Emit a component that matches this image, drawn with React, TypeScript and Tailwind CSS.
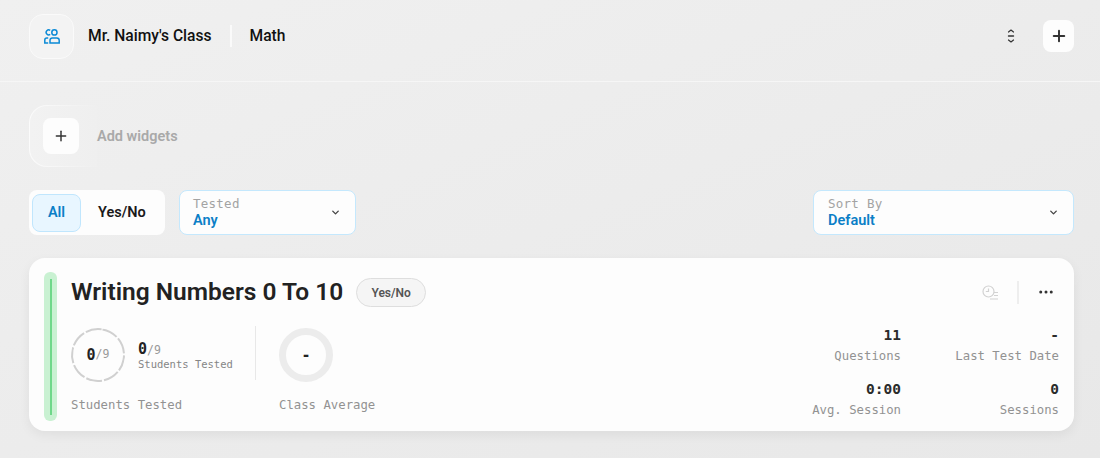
import React from "react";
import { ChevronDown, Plus, Ellipsis } from "lucide-react";

const mono = "font-['DejaVu_Sans_Mono',monospace]";

function ClassIcon() {
  return (
    <svg width="16" height="15" viewBox="0 0 16 15" fill="none" stroke="#0b8ad6" strokeWidth="1.5">
      <path d="M6.2 1.4a2.5 2.5 0 1 0 0 4" />
      <circle cx="10.4" cy="3.4" r="2.6" />
      <path d="M4.2 9H2.8a2 2 0 0 0-2 2v3h3.4" />
      <path d="M8.2 9h4.6a2.4 2.4 0 0 1 2.4 2.4V14H6v-2.8A2.2 2.2 0 0 1 8.2 9z" />
    </svg>
  );
}

function SortToggleIcon() {
  return (
    <svg width="8" height="14" viewBox="0 0 8 14" fill="none" stroke="#333" strokeWidth="1.2" strokeLinecap="round" strokeLinejoin="round">
      <path d="M1.5 3 4 1l2.5 2" />
      <path d="M1.5 7h5" strokeWidth="1.4" />
      <path d="M1.5 11 4 13l2.5-2" />
    </svg>
  );
}

function ClockListIcon() {
  return (
    <svg width="17" height="16" viewBox="0 0 17 16" fill="none" stroke="#d2d2d2" strokeWidth="1.2">
      <circle cx="6.5" cy="6.5" r="5.5" />
      <path d="M6.5 3.5v3H3.8" />
      <path d="M12 7.5h4M12 10.5h4M8 14h8" />
    </svg>
  );
}

function DashedRing() {
  return (
    <svg width="54" height="54" viewBox="0 0 54 54" fill="none" className="-rotate-[80deg]">
      <circle cx="27" cy="27" r="26" stroke="#d0d0d0" strokeWidth="2" strokeDasharray="16.15 2" />
    </svg>
  );
}

function SelectBox({ label, value, className }: { label: string; value: string; className: string }) {
  return (
    <div className={`${className} h-[45px] bg-[#fdfdfd] border border-[#c4e8fd] rounded-lg pr-[14px] flex items-center justify-between`}>
      <div className="flex flex-col">
        <span className={`${mono} text-[12.5px] leading-[15px] text-[#a3a3a3] tracking-[0.02em]`}>{label}</span>
        <span className="font-['Roboto',sans-serif] font-semibold text-[14.5px] leading-[19px] text-[#0b7fc7]">{value}</span>
      </div>
      <ChevronDown size={11} strokeWidth={3} className="text-[#444]" />
    </div>
  );
}

function Stat({ value, label }: { value: string; label: string }) {
  return (
    <div className="flex flex-col items-end">
      <span className={`${mono} font-semibold text-[14.5px] leading-[20px] text-[#2b2b2b]`}>{value}</span>
      <span className={`${mono} text-[12.3px] leading-[16px] mt-[3px] text-[#929292]`}>{label}</span>
    </div>
  );
}

export default function App() {
  return (
    <div className="w-[1100px] h-[458px] overflow-hidden bg-gradient-to-br from-[#f0f0f0] to-[#e8e8e8] font-['Roboto',sans-serif]">
      {/* header */}
      <header className="h-[82px] border-b border-[#f6f6f6] pl-[29px] pr-[26px] pb-[9px] flex items-center">
        <div className="w-[45px] h-[45px] mt-px rounded-[14px] border border-[#fafafa] bg-[#f3f3f3] flex items-center justify-center">
          <ClassIcon />
        </div>
        <span className="ml-[14px] mt-[2px] text-[15.6px] font-medium text-[#111] leading-none">Mr. Naimy's Class</span>
        <div className="ml-[18px] w-[2px] h-[22px] bg-[#fafafa]" />
        <span className="ml-[18px] mt-[2px] text-[15.6px] font-medium text-[#111] leading-none">Math</span>
        <div className="ml-auto mr-[28px] flex items-center">
          <SortToggleIcon />
        </div>
        <button className="w-[31px] h-[32px] bg-[#fdfdfd] rounded-lg flex items-center justify-center">
          <Plus size={18} strokeWidth={2.6} className="text-[#333]" />
        </button>
      </header>

      <div className="pl-[29px] pr-[26px]">
        {/* add widgets */}
        <div className="mt-[23px] h-[62px] flex items-center">
          <div className="w-[68px] h-[62px] rounded-l-[18px] p-px pr-0 bg-gradient-to-r from-[#fbfbfb] to-[#efefef]">
            <div className="w-full h-full rounded-l-[17px] bg-gradient-to-r from-[#f2f2f2] to-[#efefef] pl-[13px] flex items-center">
              <button className="w-[36px] h-[36px] bg-[#fdfdfd] rounded-lg flex items-center justify-center">
                <Plus size={16} strokeWidth={2.2} className="text-[#333]" />
              </button>
            </div>
          </div>
          <span className="mt-[2px] text-[14.5px] font-semibold text-[#a9a9a9]">Add widgets</span>
        </div>

        {/* filters */}
        <div className="mt-[23px] flex items-center">
          <div className="w-[136px] h-[45px] bg-[#fdfdfd] rounded-lg px-[3px] flex items-center">
            <div className="w-[49px] h-[38px] bg-[#e8f6ff] border border-[#c0e6fd] rounded-lg flex items-center justify-center text-[14.5px] font-semibold text-[#0b7fc7]">
              All
            </div>
            <span className="ml-[17px] text-[14.5px] font-semibold text-[#1a1a1a]">Yes/No</span>
          </div>
          <div className="ml-[14px]">
            <SelectBox label="Tested" value="Any" className="w-[177px] pl-[13px]" />
          </div>
          <div className="ml-auto">
            <SelectBox label="Sort By" value="Default" className="w-[261px] pl-[14px]" />
          </div>
        </div>

        {/* test card */}
        <div className="mt-[23px] h-[173px] bg-[#fdfdfd] rounded-2xl shadow-[0_4px_12px_rgba(0,0,0,0.06)] pl-[15px] pr-[15px] pt-[14px] flex">
          <div className="w-[13px] h-[149px] bg-[#c9f1d2] rounded-md flex justify-center shrink-0">
            <div className="w-[2px] h-[136px] mt-[7px] bg-[#6fd88a]" />
          </div>

          <div className="ml-[14px] flex-1 flex flex-col">
            <div className="h-[41px] flex items-center">
              <h2 className="text-[24.5px] font-semibold text-[#222] leading-none">Writing Numbers 0 To 10</h2>
              <span className="ml-[13px] h-[29px] w-[70px] rounded-full bg-[#f5f5f5] border border-[#dedede] text-[12px] font-semibold text-[#555] flex items-center justify-center">
                Yes/No
              </span>
              <div className="ml-auto flex items-center">
                <ClockListIcon />
                <div className="ml-[18px] w-[2px] h-[23px] bg-[#eeeeee]" />
                <Ellipsis size={18} strokeWidth={2} className="ml-[18px] mr-[4px] -mt-[2px] text-[#333]" />
              </div>
            </div>

            <div className="mt-[15px] flex">
              <div className="flex flex-col">
                <div className="flex">
                  <div className="w-[185px] h-[54px] flex items-center shrink-0">
                    <div className="relative w-[54px] h-[54px] shrink-0">
                      <DashedRing />
                      <div className={`absolute inset-0 flex items-center justify-center ${mono}`}>
                        <span className="text-[15px] font-semibold text-[#222]">0</span>
                        <span className="text-[11.5px] text-[#999]">/9</span>
                      </div>
                    </div>
                    <div className="ml-[13px] flex flex-col">
                      <div className={mono}>
                        <span className="text-[15px] leading-[18px] font-semibold text-[#222]">0</span>
                        <span className="text-[11.5px] text-[#999]">/9</span>
                      </div>
                      <span className={`${mono} -mt-[3px] mb-[3px] text-[10.5px] leading-[12px] text-[#858585]`}>Students Tested</span>
                    </div>
                    <div className="ml-auto -mt-[4px] w-px h-[54px] bg-[#e8e8e8]" />
                  </div>
                  <div className="ml-[23px] w-[54px] h-[54px] rounded-full border-[7px] border-[#ececec] flex items-center justify-center">
                    <span className={`${mono} font-semibold text-[15px] text-[#222]`}>-</span>
                  </div>
                </div>
                <div className={`mt-[15px] flex ${mono} text-[12.3px] leading-[16px] text-[#929292]`}>
                  <span className="w-[208px]">Students Tested</span>
                  <span>Class Average</span>
                </div>
              </div>
              <div className="ml-auto w-[260px] -mt-[3px] grid grid-cols-[102px_158px] gap-y-[15px]">
                <Stat value="11" label="Questions" />
                <Stat value="-" label="Last Test Date" />
                <Stat value="0:00" label="Avg. Session" />
                <Stat value="0" label="Sessions" />
              </div>
            </div>
          </div>
        </div>
      </div>
    </div>
  );
}
